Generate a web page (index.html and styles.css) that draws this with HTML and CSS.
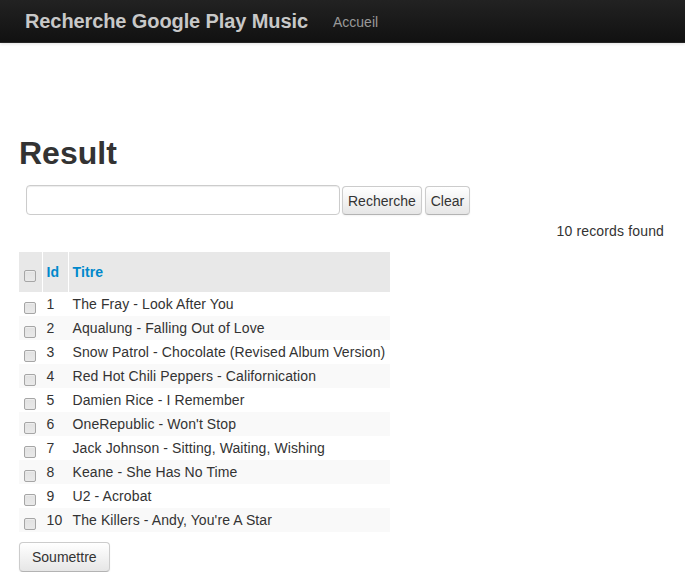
FILE: index.html
```html
<!DOCTYPE html>
<html lang="fr">
<head>
<meta charset="utf-8">
<title>Recherche Google Play Music</title>
<link rel="stylesheet" href="styles.css">
</head>
<body>
<div class="navbar">
  <a class="brand" href="#">Recherche Google Play Music</a>
  <a class="nav-link" href="#">Accueil</a>
</div>
<div class="main">
  <h1 class="title">Result</h1>
  <form class="search">
    <input class="search-input" type="text">
    <button class="btn btn-sm" type="button">Recherche</button>
    <button class="btn btn-sm" type="button">Clear</button>
  </form>
  <div class="count">10 records found</div>
  <table class="results">
    <thead>
      <tr>
        <th class="c-check"><input type="checkbox" class="cb"></th>
        <th class="c-id"><a href="#">Id</a></th>
        <th class="c-title"><a href="#">Titre</a></th>
      </tr>
    </thead>
    <tbody>
      <tr><td class="c-check"><input type="checkbox" class="cb"></td><td class="c-id">1</td><td class="c-title">The Fray - Look After You</td></tr>
      <tr><td class="c-check"><input type="checkbox" class="cb"></td><td class="c-id">2</td><td class="c-title">Aqualung - Falling Out of Love</td></tr>
      <tr><td class="c-check"><input type="checkbox" class="cb"></td><td class="c-id">3</td><td class="c-title">Snow Patrol - Chocolate (Revised Album Version)</td></tr>
      <tr><td class="c-check"><input type="checkbox" class="cb"></td><td class="c-id">4</td><td class="c-title">Red Hot Chili Peppers - Californication</td></tr>
      <tr><td class="c-check"><input type="checkbox" class="cb"></td><td class="c-id">5</td><td class="c-title">Damien Rice - I Remember</td></tr>
      <tr><td class="c-check"><input type="checkbox" class="cb"></td><td class="c-id">6</td><td class="c-title">OneRepublic - Won't Stop</td></tr>
      <tr><td class="c-check"><input type="checkbox" class="cb"></td><td class="c-id">7</td><td class="c-title">Jack Johnson - Sitting, Waiting, Wishing</td></tr>
      <tr><td class="c-check"><input type="checkbox" class="cb"></td><td class="c-id">8</td><td class="c-title">Keane - She Has No Time</td></tr>
      <tr><td class="c-check"><input type="checkbox" class="cb"></td><td class="c-id">9</td><td class="c-title">U2 - Acrobat</td></tr>
      <tr><td class="c-check"><input type="checkbox" class="cb"></td><td class="c-id">10</td><td class="c-title">The Killers - Andy, You're A Star</td></tr>
    </tbody>
  </table>
  <button class="btn btn-submit" type="button">Soumettre</button>
</div>
</body>
</html>
```
FILE: styles.css
```css
* { box-sizing: border-box; }
html, body { margin: 0; padding: 0; background: #fff; }
body {
  font-family: "Liberation Sans", Arial, sans-serif;
  font-size: 14px;
  line-height: 20px;
  color: #333;
  letter-spacing: 0.1px;
}
.navbar {
  height: 43px;
  display: flex;
  align-items: center;
  padding: 0 25px;
  gap: 25px;
  background: linear-gradient(to bottom, #222 0%, #111 100%);
  border-bottom: 1px solid #252525;
  box-shadow: 0 1px 3px rgba(0,0,0,0.12);
}
.brand {
  font-size: 20px;
  font-weight: bold;
  color: #c8c8c8;
  text-decoration: none;
  line-height: 20px;
  letter-spacing: -0.1px;
}
.nav-link {
  font-size: 14px;
  color: #999;
  text-decoration: none;
  line-height: 20px;
  margin-top: 1px;
  letter-spacing: 0;
}
.main {
  padding: 90px 21px 0 19px;
}
.title {
  margin: 0 0 12px 0;
  font-size: 32px;
  line-height: 40px;
  font-weight: bold;
  color: #333;
  letter-spacing: 0;
}
.search {
  display: flex;
  align-items: center;
  gap: 3px;
  margin: 0 0 0 7px;
  height: 30px;
}
.search-input {
  width: 314px;
  height: 30px;
  border: 1px solid #ccc;
  border-radius: 4px;
  box-shadow: inset 0 1px 1px rgba(0,0,0,0.075);
  margin: 0 -1px 0 0;
  padding: 4px 6px;
  font: inherit;
}
.btn {
  font-family: "Liberation Sans", Arial, sans-serif;
  font-size: 14px;
  line-height: 20px;
  color: #333;
  letter-spacing: 0;
  background: linear-gradient(to bottom, #fff 0%, #e6e6e6 100%);
  border: 1px solid #ccc;
  border-bottom-color: #b3b3b3;
  border-radius: 4px;
  box-shadow: inset 0 1px 0 rgba(255,255,255,0.2), 0 1px 2px rgba(0,0,0,0.05);
  cursor: pointer;
}
.btn-sm {
  height: 29px;
  padding: 0 5px;
  margin-top: 1px;
}
.count {
  text-align: right;
  margin-top: 6px;
  height: 20px;
  letter-spacing: 0.15px;
}
.results {
  margin-top: 11px;
  border-collapse: collapse;
  width: 371px;
}
.results th, .results td {
  padding: 2px 4px;
  text-align: left;
  vertical-align: middle;
}
.results th {
  background: #e8e8e8;
  padding-top: 10px;
  padding-bottom: 10px;
  font-weight: bold;
}
.results th a {
  color: #0088cc;
  text-decoration: none;
}
.results th + th, .results td + td {
  border-left: 1px solid #fff;
}
.results tbody tr:nth-child(even) td {
  background: #f9f9f9;
}
.results tbody td + td { border-left-color: transparent; }
.results tbody tr:nth-child(even) td + td { border-left-color: #f9f9f9; }
.c-check { width: 23px; padding-left: 5px !important; padding-right: 0 !important; }
.c-id { width: 26px; }
.cb {
  -webkit-appearance: none;
  appearance: none;
  display: inline-block;
  margin: 5px 0 0 0;
  width: 12px;
  height: 12px;
  vertical-align: middle;
  border: 1px solid #a6a6a6;
  border-radius: 2px;
  background: linear-gradient(to bottom, #e2e2e2 0%, #e9e9e9 100%);
  box-shadow: inset 0 1px 0 rgba(255,255,255,0.4);
}
.btn-submit {
  margin-top: 10px;
  height: 30px;
  padding: 4px 12px;
}
```
